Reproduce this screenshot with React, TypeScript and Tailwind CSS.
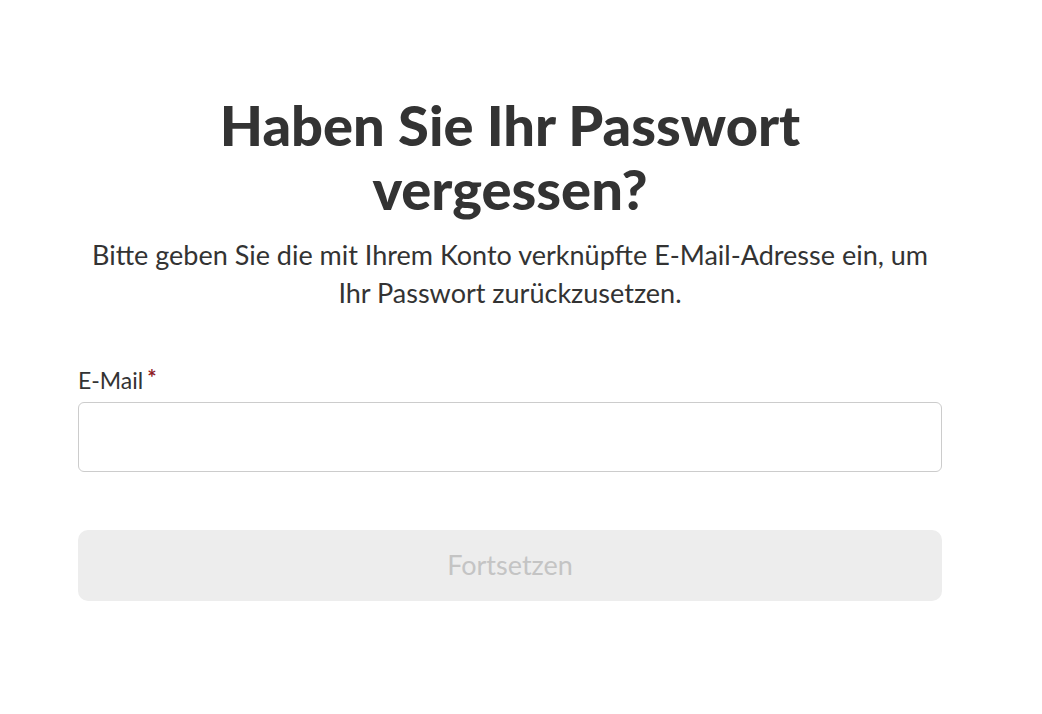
import React from 'react';

export default function App() {
  return (
    <div className="min-h-screen bg-white font-['Lato',sans-serif] text-[#333333]">
      <div className="ml-[78px] w-[864px] pt-[93px]">
        <h1 className="mx-auto w-[640px] text-center text-[56px] font-black leading-[64px]">
          Haben Sie Ihr Passwort vergessen?
        </h1>
        <p className="mt-[15px] text-center text-[27px] leading-[38px]">
          Bitte geben Sie die mit Ihrem Konto verknüpfte E-Mail-Adresse ein, um
          <br />
          Ihr Passwort zurückzusetzen.
        </p>

        <form className="mt-[54px]" onSubmit={(e) => e.preventDefault()}>
          <label htmlFor="email" className="flex items-start text-[23px] leading-[28px]">
            E-Mail
            <span className="ml-[4px] text-[22px] font-bold leading-[24px] text-[#8f1b26]">*</span>
          </label>
          <input
            id="email"
            type="email"
            className="mt-[8px] block h-[70px] w-full rounded-[6px] border border-[#cccccc] px-4 text-[20px] outline-none"
          />
          <button
            type="submit"
            disabled
            className="mt-[58px] flex h-[71px] w-full items-center justify-center rounded-[10px] bg-[#ededed] text-[27px] text-[#c4c4c4]"
          >
            Fortsetzen
          </button>
        </form>
      </div>
    </div>
  );
}
